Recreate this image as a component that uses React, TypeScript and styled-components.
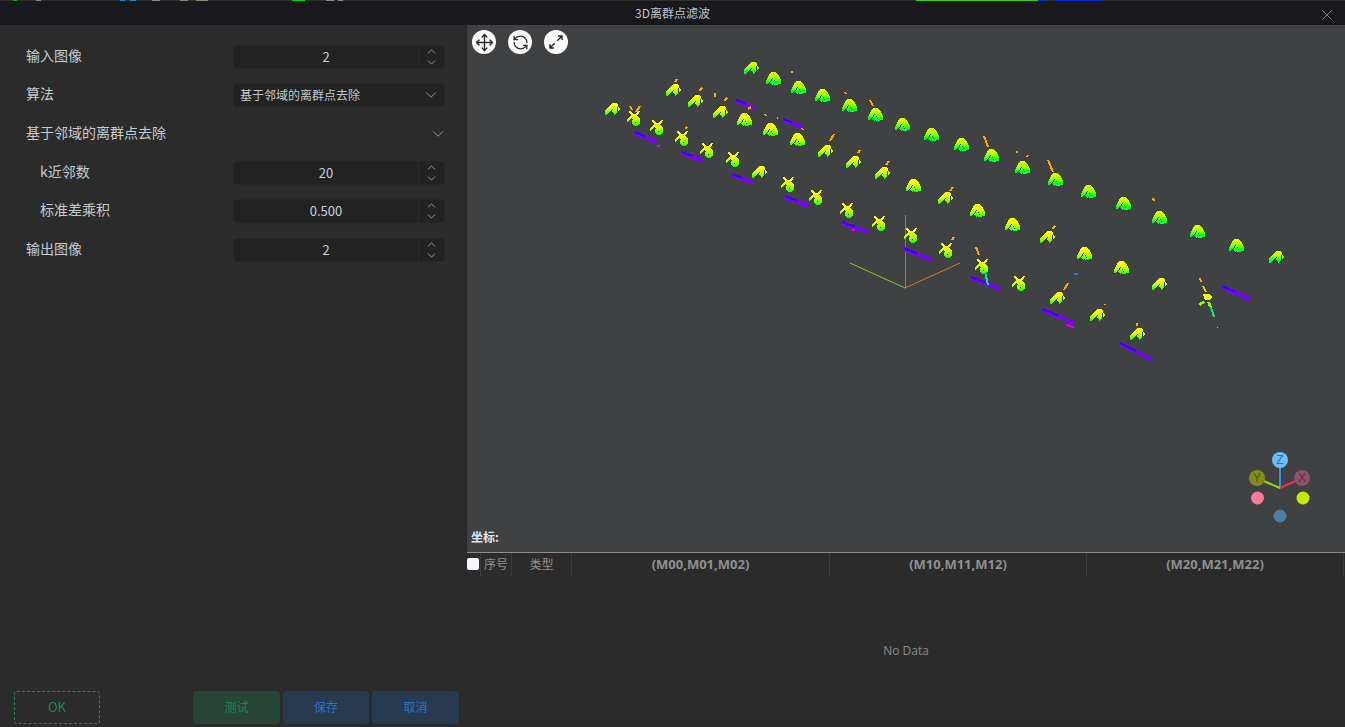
import { ChevronDown, ChevronUp, Move, RefreshCcw, X } from "lucide-react";
import styled, { createGlobalStyle } from "styled-components";

const GlobalStyle = createGlobalStyle`
  html, body {
    margin: 0;
    padding: 0;
    height: 100%;
    background: #2b2b2b;
    overflow: hidden;
  }
  * {
    box-sizing: border-box;
  }
  body {
    font-family: "Noto Sans CJK SC", "Noto Sans", sans-serif;
  }
`;

const Page = styled.div`
  width: 1345px;
  height: 727px;
  display: flex;
  flex-direction: column;
  overflow: hidden;
`;

// sliver of the window behind the dialog
const BehindStrip = styled.div`
  height: 1px;
  flex: none;
  background: linear-gradient(
    90deg,
    #2f2f2f 13px,
    #12a012 13px 17px,
    #2f2f2f 17px 36px,
    #8a8680 36px 41px,
    #2f2f2f 41px 120px,
    #1d87c9 120px 125px,
    #2f2f2f 125px 130px,
    #1d87c9 130px 136px,
    #2f2f2f 136px 152px,
    #8a8a8a 152px 160px,
    #2f2f2f 160px 180px,
    #8a8678 180px 188px,
    #2f2f2f 188px 196px,
    #8a8678 196px 208px,
    #2f2f2f 208px 292px,
    #12d012 292px 305px,
    #2f2f2f 305px 326px,
    #8a8a8a 326px 334px,
    #2f2f2f 334px 338px,
    #8a8a8a 338px 343px,
    #2f2f2f 343px 916px,
    #44cc00 916px 1038px,
    #0a2ad8 1038px 1046px,
    #2f2f2f 1046px 1056px,
    #0a2ad8 1056px 1102px,
    #2f2f2f 1102px
  );
`;

const TitleBar = styled.div`
  height: 24px;
  flex: none;
  background: #18181d;
  display: grid;
  grid-template-columns: 1fr auto 1fr;
  align-items: center;
  color: #bcc4cc;
  font-size: 12px;
  line-height: 24px;
`;

const TitleText = styled.span`
  grid-column: 2;
`;

const CloseButton = styled.div`
  grid-column: 3;
  justify-self: end;
  margin-right: 9px;
  margin-top: 3px;
  display: flex;
  color: #8d8d8f;
`;

const Body = styled.div`
  flex: 1;
  display: flex;
  min-height: 0;
`;

const LeftPanel = styled.div`
  width: 467px;
  flex: none;
  background: #2b2b2b;
  border-right: 1px solid #272727;
  display: flex;
  flex-direction: column;
  padding-top: 20px;
`;

const Row = styled.div<{ $indent?: boolean; $top?: number }>`
  height: 24px;
  display: flex;
  align-items: center;
  justify-content: space-between;
  padding: 0 21px 0 ${({ $indent }) => ($indent ? 40 : 26)}px;
  margin-bottom: 14px;
  margin-top: ${({ $top }) => $top ?? 0}px;
  color: #c6ccd0;
  font-size: 14px;
  line-height: 20px;
`;

const Label = styled.div<{ $lift?: number }>`
  padding-bottom: ${({ $lift }) => $lift ?? 4}px;
`;

const Field = styled.div`
  width: 212px;
  height: 24px;
  flex: none;
  background: #222222;
  border: 1px solid #262626;
  border-radius: 4px;
  display: flex;
  align-items: center;
  color: #c8d0d6;
`;

const FieldValue = styled.div`
  flex: 1;
  text-align: center;
  font-size: 13px;
`;

const Stepper = styled.div`
  width: 26px;
  height: 100%;
  border-left: 1px solid #2b2b2b;
  display: flex;
  flex-direction: column;
  align-items: center;
  justify-content: center;
  color: #b4b4b4;

  svg {
    display: block;
    margin: -1px 0;
  }
`;

const SelectText = styled.div`
  flex: 1;
  padding-left: 6px;
  font-size: 12px;
  color: #c4c8cc;
`;

const SelectArrow = styled.div`
  display: flex;
  margin-right: 4px;
  color: #a8a8a8;
`;

const GroupArrow = styled.div`
  display: flex;
  margin-top: 2px;
  margin-right: -2px;
  color: #a8a8a8;
`;

const Footer = styled.div`
  margin-top: auto;
  display: flex;
  justify-content: space-between;
  padding: 0 7px 3px 14px;
`;

const FooterGroup = styled.div`
  display: flex;
  gap: 3px;
`;

const ActionButton = styled.div<{ $kind: "ok" | "test" | "plain"; $width: number }>`
  width: ${({ $width }) => $width}px;
  height: 33px;
  padding-bottom: 3px;
  display: flex;
  align-items: center;
  justify-content: center;
  font-size: ${({ $kind }) => ($kind === "ok" ? 13 : 12)}px;
  border-radius: ${({ $kind }) => ($kind === "ok" ? 3 : 4)}px;
  border: ${({ $kind }) => ($kind === "ok" ? "1px dashed #1f8a50" : "none")};
  color: ${({ $kind }) => ($kind === "plain" ? "#2a72cc" : "#1f8a50")};
  background: ${({ $kind }) =>
    $kind === "plain" ? "#273a50" : $kind === "test" ? "#264535" : "transparent"};
`;

const RightPanel = styled.div`
  flex: 1;
  display: flex;
  flex-direction: column;
  min-width: 0;
`;

const Viewport = styled.div`
  position: relative;
  height: 527px;
  flex: none;
  background: #404142;
`;

const CloudSvg = styled.svg`
  position: absolute;
  inset: 0;
  width: 878px;
  height: 527px;
`;

const ViewTools = styled.div`
  position: absolute;
  left: 5px;
  top: 5px;
  display: flex;
  gap: 12px;
`;

const ToolButton = styled.div`
  width: 24px;
  height: 24px;
  border-radius: 50%;
  background: #ffffff;
  color: #2b2b2b;
  display: flex;
  align-items: center;
  justify-content: center;
`;

const Coordinate = styled.div`
  position: absolute;
  left: 4px;
  bottom: 7px;
  color: #e4e4e4;
  font-size: 12px;
  font-weight: 700;
  line-height: 16px;
`;

const TableHead = styled.div`
  height: 24px;
  flex: none;
  border-top: 1px solid #8c8c8c;
  display: grid;
  grid-template-columns: 14px 31px 60px 258px 257px 257px 1fr;
  background: #2b2b2b;
`;

const HeadCell = styled.div<{ $strong?: boolean }>`
  display: flex;
  align-items: center;
  justify-content: center;
  padding-bottom: 2px;
  border-right: 1px solid #3c3c3c;
  color: #8f8f8f;
  font-size: ${({ $strong }) => ($strong ? 13 : 12)}px;
  font-weight: ${({ $strong }) => ($strong ? 700 : 400)};
  font-family: ${({ $strong }) =>
    $strong ? '"Open Sans", "Noto Sans", sans-serif' : "inherit"};
`;

const CheckCell = styled.div`
  display: flex;
  align-items: center;
  border-right: 1px solid #3c3c3c;
`;

const CheckBox = styled.div`
  width: 12px;
  height: 12px;
  margin-bottom: 1px;
  background: #f6f7fb;
  border-radius: 2px;
`;

const EmptyTable = styled.div`
  flex: 1;
  display: flex;
  align-items: center;
  justify-content: center;
  color: #8a8a8a;
  font-size: 12px;
  font-family: "Open Sans", "Noto Sans", sans-serif;
  padding-bottom: 2px;
`;

const MASKS: Record<string, string[]> = {
  dome: [
    ".....#####......",
    "....#######.....",
    "...#########....",
    "...##########...",
    "..###########...",
    "..############..",
    ".#####.#######..",
    ".####.#########.",
    "#####.##.######.",
    "####.##########.",
    "###.#####.#####.",
    "##...##########.",
    "......#.####....",
  ],
  spike: [
    "..##.......##...",
    "..###.....##....",
    "...###...###....",
    "....#######.....",
    "....######......",
    "...########.....",
    "..##########....",
    ".###.########...",
    "###...#######...",
    "##...########...",
    "#....########...",
    ".....###.####...",
    ".....########...",
    "......######....",
    ".......####.....",
  ],
  lean: [
    ".......#####....",
    "......#######...",
    ".....########...",
    "....#########...",
    "...#########.#..",
    "..##########.##.",
    ".######.####.##.",
    "######.#####.#..",
    "#####..#####....",
    "####....####....",
    "###......##.....",
    "##.......#......",
  ],
};

type Plant = [number, number, string, number?];

const PLANTS: Plant[] = [
  // back row
  [752, 68, "lean", 1], [774, 78, "dome", 1], [799, 87, "dome", 1], [823, 95, "dome", 1],
  [850, 105, "dome", 1], [876, 114, "dome", 1], [903, 124, "dome", 1], [932, 134, "dome", 1],
  [962, 144, "dome", 1], [992, 155, "dome", 1], [1023, 167, "dome", 1], [1056, 179, "dome", 1],
  [1089, 191, "dome", 1], [1124, 203, "dome", 1], [1160, 217, "dome", 1], [1198, 231, "dome", 1],
  [1237, 245, "dome", 1], [1277, 257, "lean", 1],
  // middle row
  [674, 90, "lean", 0], [696, 101, "lean", 0], [721, 112, "lean", 0], [745, 119, "dome", 0],
  [771, 129, "dome", 0], [798, 139, "dome", 0], [826, 151, "lean", 0], [854, 162, "lean", 0],
  [883, 173, "lean", 0], [914, 185, "dome", 0], [946, 198, "lean", 0], [978, 210, "dome", 0],
  [1013, 224, "dome", 0], [1048, 237, "lean", 0], [1085, 253, "dome", 0], [1122, 267, "dome", 0],
  [1160, 284, "lean", 0],
  // front row
  [613, 109, "lean", 0], [635, 118, "spike", 0], [658, 127, "spike", 0], [683, 138, "spike", 0],
  [708, 150, "spike", 0], [734, 159, "spike", 0], [760, 172, "lean", 0], [789, 184, "spike", 0],
  [817, 197, "spike", 0], [848, 210, "spike", 0], [880, 223, "spike", 0], [912, 235, "spike", 0],
  [947, 250, "spike", 0], [983, 266, "spike", 0], [1020, 283, "spike", 0], [1058, 298, "lean", 0],
  [1098, 315, "lean", 0], [1138, 334, "lean", 0],
];

const TIPS: [number, number, number, number][] = [
  [677, 79, 675, 82], [702, 88, 699, 91], [715, 93, 715, 97], [727, 98, 724, 101],
  [751, 107, 748, 109], [765, 114, 766, 116], [777, 118, 778, 118], [792, 71, 792, 73],
  [845, 92, 846, 94], [802, 128, 803, 130], [834, 134, 830, 141], [860, 150, 858, 153],
  [640, 106, 636, 112], [630, 106, 632, 110], [687, 127, 685, 129], [870, 100, 873, 106],
  [889, 161, 886, 165], [984, 136, 988, 147], [1017, 151, 1017, 153], [1028, 155, 1027, 157],
  [1048, 160, 1053, 172], [1153, 198, 1154, 201], [953, 187, 950, 191], [1055, 226, 1052, 229],
  [954, 237, 952, 240], [976, 247, 979, 255], [1068, 283, 1064, 290], [1105, 304, 1105, 305],
  [1137, 323, 1137, 326], [1200, 278, 1201, 282],
];

const BARS: [number, number, number, number][] = [
  [736, 101, 755, 108], [783, 120, 802, 127], [635, 133, 656, 142], [682, 153, 703, 161],
  [732, 175, 753, 183], [785, 197, 808, 206], [842, 223, 868, 232], [904, 249, 931, 260],
  [971, 278, 1000, 289], [1042, 310, 1074, 323], [1120, 344, 1152, 360], [1222, 287, 1250, 299],
];

const MAGENTA: [number, number][] = [
  [657, 145], [741, 114], [852, 229], [1066, 324], [1068, 325], [1071, 326],
];

const PlantBlob = ({ x, y, kind, back }: { x: number; y: number; kind: string; back: boolean }) => {
  const mask = MASKS[kind];
  const from = back ? 70 : 60;
  const to = back ? 150 : 115;
  return (
    <g transform={`translate(${x - 8} ${y - Math.floor(mask.length / 2)})`} shapeRendering="auto">
      {mask.map((line, r) => {
        // one rect per run of filled cells
        const runs = [...line.matchAll(/#+/g)];
        const hue = from + (to - from) * Math.pow(r / (mask.length - 1), 2.2);
        return runs.map((m) => (
          <rect key={`${r}-${m.index}`} x={m.index} y={r} width={m[0].length} height={1} fill={`hsl(${hue} 100% 50%)`} />
        ));
      })}
    </g>
  );
};

const PointCloud = () => (
  <CloudSvg viewBox="467 25 878 527" shapeRendering="crispEdges">
    {/* world axes */}
    <g shapeRendering="auto" strokeWidth={1} fill="none">
      <line x1={905.5} y1={288} x2={905.5} y2={215} stroke="#3a93c8" />
      <line x1={905} y1={288} x2={850} y2={263} stroke="#86c832" />
      <line x1={905} y1={288} x2={960} y2={263} stroke="#e07a1a" />
    </g>
    {BARS.map(([x1, y1, x2, y2], i) => (
      <g key={i}>
        <line x1={x1} y1={y1} x2={x2} y2={y2} stroke="#7a00ff" strokeWidth={4} />
        <line x1={x1} y1={y1 - 1} x2={x1 + (x2 - x1) * 0.5} y2={y1 + (y2 - y1) * 0.5 - 1} stroke="#3a00ff" strokeWidth={2} />
      </g>
    ))}
    {MAGENTA.map(([x, y], i) => (
      <rect key={i} x={x} y={y} width={3} height={2} fill="#e000e8" />
    ))}
    {PLANTS.map(([x, y, kind, back], i) => (
      <PlantBlob key={i} x={x} y={y} kind={kind} back={back === 1} />
    ))}
    {TIPS.map(([x1, y1, x2, y2], i) => (
      <line key={i} x1={x1} y1={y1} x2={x2} y2={y2} stroke="#ffa800" strokeWidth={2} />
    ))}
    {/* the tall plant at the far end of the middle row */}
    <line x1={1203} y1={286} x2={1206} y2={292} stroke="#ffd000" strokeWidth={2} />
    <path d="M1203 294h7l2 3-3 3h-4z" fill="#f0ff00" />
    <path d="M1198 304l5-3 2 2-5 3zM1207 302h3l2 5h-3z" fill="#88ff00" />
    <line x1={1211} y1={307} x2={1214} y2={317} stroke="#00f080" strokeWidth={2} />
    <rect x={1217} y={327} width={1} height={1} fill="#40e0d0" />
    {/* stray points */}
    <rect x={1074} y={273} width={4} height={2} fill="#0a84ff" />
    <line x1={985} y1={272} x2={988} y2={285} stroke="#00e8a0" strokeWidth={2} />
    {/* orientation gizmo */}
    <g shapeRendering="auto">
      <line x1={1280} y1={488} x2={1280} y2={462} stroke="#3b8fe8" strokeWidth={2} />
      <line x1={1280} y1={488} x2={1259} y2={479} stroke="#8fdc10" strokeWidth={2} />
      <line x1={1280} y1={488} x2={1300} y2={479} stroke="#f0305a" strokeWidth={2} />
      <circle cx={1280} cy={460} r={8} fill="#6cbcf8" />
      <circle cx={1257} cy={478} r={8} fill="#848b1a" />
      <circle cx={1302} cy={478} r={8} fill="#8e5168" />
      <circle cx={1257.5} cy={498} r={6.5} fill="#f87a96" />
      <circle cx={1303} cy={498} r={6.5} fill="#c4ea00" />
      <circle cx={1280} cy={516} r={6.5} fill="#4f7fa3" />
      <g fontFamily='"Liberation Sans", sans-serif' fontSize={12} textAnchor="middle">
        <text x={1280} y={464} fill="#3a6e9a">Z</text>
        <text x={1257} y={482} fill="#50550f">Y</text>
        <text x={1302} y={482} fill="#5e3044">X</text>
      </g>
    </g>
  </CloudSvg>
);

const NumberField = ({ value }: { value: string }) => (
  <Field>
    <FieldValue>{value}</FieldValue>
    <Stepper>
      <ChevronUp size={13} strokeWidth={1.4} />
      <ChevronDown size={13} strokeWidth={1.4} />
    </Stepper>
  </Field>
);

export default function App() {
  return (
    <Page>
      <GlobalStyle />
      <BehindStrip />
      <TitleBar>
        <TitleText>3D离群点滤波</TitleText>
        <CloseButton>
          <X size={18} strokeWidth={1.2} />
        </CloseButton>
      </TitleBar>
      <Body>
        <LeftPanel>
          <Row>
            <Label>输入图像</Label>
            <NumberField value="2" />
          </Row>
          <Row>
            <Label>算法</Label>
            <Field>
              <SelectText>基于邻域的离群点去除</SelectText>
              <SelectArrow>
                <ChevronDown size={18} strokeWidth={1.1} />
              </SelectArrow>
            </Field>
          </Row>
          <Row>
            <Label $lift={2}>基于邻域的离群点去除</Label>
            <GroupArrow>
              <ChevronDown size={18} strokeWidth={1.1} />
            </GroupArrow>
          </Row>
          <Row $indent $top={2}>
            <Label>k近邻数</Label>
            <NumberField value="20" />
          </Row>
          <Row $indent>
            <Label>标准差乘积</Label>
            <NumberField value="0.500" />
          </Row>
          <Row $top={1}>
            <Label>输出图像</Label>
            <NumberField value="2" />
          </Row>
          <Footer>
            <ActionButton $kind="ok" $width={86}>OK</ActionButton>
            <FooterGroup>
              <ActionButton $kind="test" $width={87}>测试</ActionButton>
              <ActionButton $kind="plain" $width={86}>保存</ActionButton>
              <ActionButton $kind="plain" $width={87}>取消</ActionButton>
            </FooterGroup>
          </Footer>
        </LeftPanel>
        <RightPanel>
          <Viewport>
            <PointCloud />
            <ViewTools>
              <ToolButton>
                <Move size={19} strokeWidth={1.8} />
              </ToolButton>
              <ToolButton>
                <RefreshCcw size={17} strokeWidth={1.8} />
              </ToolButton>
              <ToolButton>
                <svg width="16" height="16" viewBox="0 0 24 24" fill="none" stroke="currentColor" strokeWidth="2.2">
                  <path d="M15 3h6v6M21 3l-7 7M9 21H3v-6M3 21l7-7" />
                </svg>
              </ToolButton>
            </ViewTools>
            <Coordinate>坐标:</Coordinate>
          </Viewport>
          <TableHead>
            <CheckCell>
              <CheckBox />
            </CheckCell>
            <HeadCell>序号</HeadCell>
            <HeadCell>类型</HeadCell>
            <HeadCell $strong>(M00,M01,M02)</HeadCell>
            <HeadCell $strong>(M10,M11,M12)</HeadCell>
            <HeadCell $strong>(M20,M21,M22)</HeadCell>
          </TableHead>
          <EmptyTable>No Data</EmptyTable>
        </RightPanel>
      </Body>
    </Page>
  );
}
